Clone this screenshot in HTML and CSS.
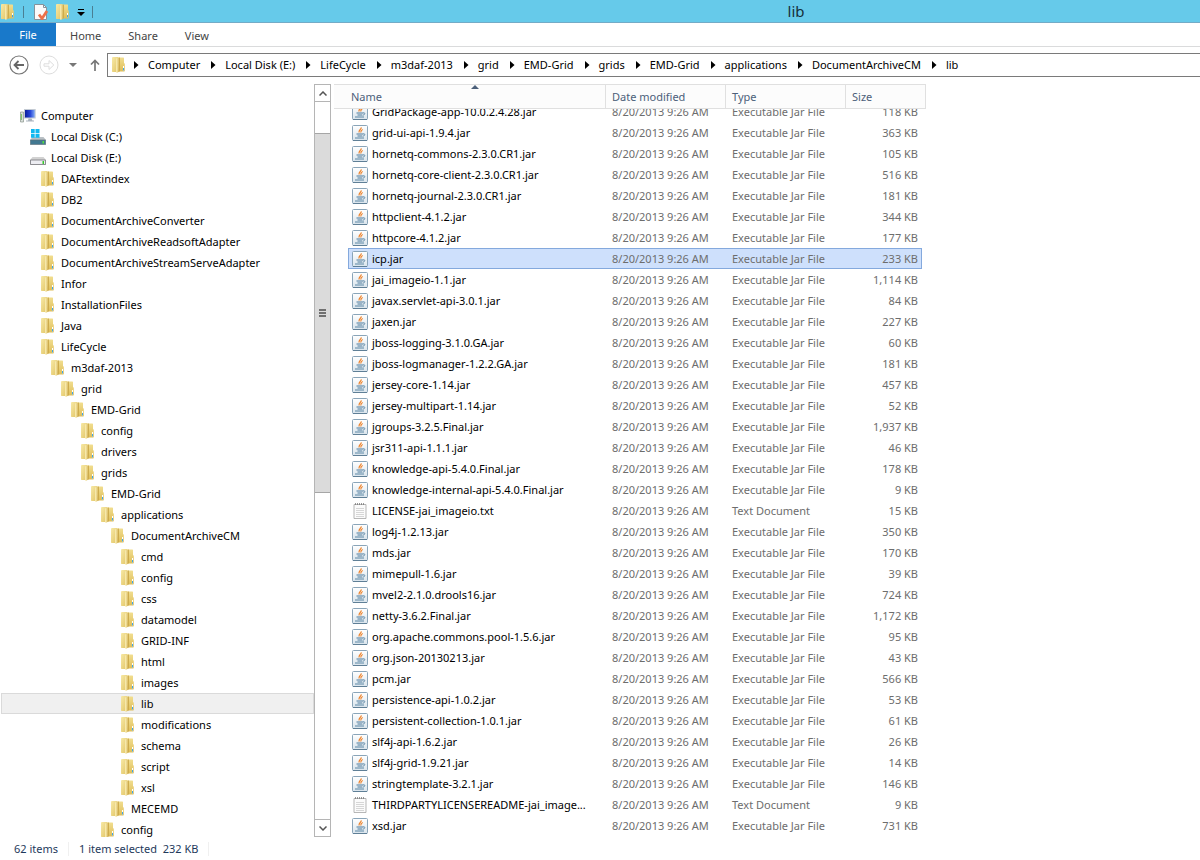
FILE: index.html
```html
<!DOCTYPE html>
<html lang="en">
<head>
<meta charset="utf-8">
<title>lib</title>
<link rel="stylesheet" href="styles.css">
</head>
<body>
<svg class="defs" aria-hidden="true">
  <defs>
    <linearGradient id="gf" x1="0" x2="1" y1="0" y2="1"><stop offset="0" stop-color="#f7e9a6"/><stop offset="1" stop-color="#e2c566"/></linearGradient>
    <linearGradient id="gb" x1="0" x2="0" y1="0" y2="1"><stop offset="0" stop-color="#f1de90"/><stop offset="1" stop-color="#dfbd58"/></linearGradient>
    <linearGradient id="gm" x1="0" x2="1" y1="0" y2="0"><stop offset="0" stop-color="#fbf0b8"/><stop offset="1" stop-color="#d9b95c"/></linearGradient>
    <linearGradient id="gj" x1="0" x2="0" y1="0" y2="1"><stop offset="0" stop-color="#ffffff"/><stop offset="1" stop-color="#d9e4ec"/></linearGradient>
    <linearGradient id="gs" x1="0" x2="1" y1="0" y2="0"><stop offset="0" stop-color="#0a1e9c"/><stop offset=".55" stop-color="#2746d8"/><stop offset="1" stop-color="#7fa8f4"/></linearGradient>
  </defs>
  <symbol id="folder" viewBox="0 0 16 16">
    <path d="M7 .5h5.500l.5.500V6l.8.800v7.200l-.5.500H7z" fill="url(#gb)"/>
    <path d="M1 .5L1.500 0H7v15H1.500L1 14.500z" fill="url(#gf)"/>
    <path d="M5 1.500L8.500.3V14L6 16l-1-.800z" fill="url(#gm)"/>
    <path d="M8.200.8h.8V14l-1.500 1.200z" fill="#cdab4c"/>
    <path d="M12 9h1v4.500h-1z" fill="#fff"/>
    <path d="M12 11h1v2.500h-1z" fill="#3fa5e8"/>
  </symbol>
  <symbol id="jar" viewBox="0 0 16 16">
    <rect x=".5" y=".5" width="15" height="15" rx="1" fill="url(#gj)" stroke="#8aa5b9"/>
    <path d="M1 15.500h14" stroke="#5f7f96"/>
    <path d="M9.200 2.300C9.800 4.300 6 5 7.200 7.500M10.800 4.500C8.700 5 8.800 6.300 8.800 7.500" fill="none" stroke="#ee8026" stroke-width="1.200"/>
    <path d="M4.500 9h6.500M5.500 11h4.500" fill="none" stroke="#4d7b9b" stroke-width="1.200"/>
    <path d="M3 13h9M11 8.900c2.600-.6 2.400 2-.5 2.300" fill="none" stroke="#5a86a4"/>
  </symbol>
  <symbol id="txt" viewBox="0 0 16 16">
    <path d="M2 1.500h12v14H2z" fill="#fbfbfb" stroke="#a5a5a5" stroke-width=".8"/>
    <path d="M4 5.500h8M4 7.500h8M4 9.500h8M4 11.500h8M4 13.500h8" stroke="#d6d6d6"/>
    <path d="M3 1h10" stroke="#777" stroke-width="1.500" stroke-dasharray="1 1"/>
  </symbol>
  <symbol id="pc" viewBox="0 0 16 16">
    <path d="M.5 4h3v10h-3z" fill="#d9dfda" stroke="#8b968e" stroke-width=".7"/>
    <path d="M1.300 6v6" stroke="#6fbf52"/>
    <path d="M4 1h11.700v9.500H4z" fill="#c3cad3"/>
    <path d="M5 2h9.700v7.500H5z" fill="url(#gs)"/>
    <path d="M8.500 10.500h3l1 2h1.500v1H6v-1h2z" fill="#aab3bd"/>
  </symbol>
  <symbol id="drive" viewBox="0 0 16 16">
    <path d="M2.500 7h11L16 10v4.500l-.5.500H.5l-.5-.5V10z" fill="#d2d2d2"/>
    <path d="M.5 10h15v4.500H.5z" fill="#ededf2" stroke="#77777c" stroke-width=".8"/>
    <path d="M12.500 11h1.500v3h-1.500z" fill="#39c82c"/>
  </symbol>
  <symbol id="windrive" viewBox="0 0 16 16">
    <path d="M2.500 8h11L16 11H0z" fill="#b9c0c5"/>
    <path d="M.3 11h15.400v4.500H.3z" fill="#427891" stroke="#5c6b74" stroke-width=".6"/>
    <path d="M12.500 12h1.500v2.500h-1.500z" fill="#53e03c"/>
    <path d="M1 0h3.700v4H1zM5.500 0h4v4h-4zM1 4.800h3.700v4H1zM5.500 4.800h4v4h-4z" fill="#10b8f0"/>
  </symbol>
  <symbol id="sep" viewBox="0 0 5 8"><path d="M0 0l4.500 4L0 8z" fill="#000"/></symbol>
</svg>

<header class="titlebar">
  <div class="quick">
    <svg class="ico"><use href="#folder"/></svg>
    <span class="bar"></span>
    <button class="tool" aria-label="Properties"><svg viewBox="0 0 16 16" class="ico"><path d="M1.500.5h9l3 3v12h-12z" fill="#fafafa" stroke="#85929b"/><path d="M10.500.5v3h3" fill="none" stroke="#85929b"/><path d="M6 10.500l3 4 5-7.500" fill="none" stroke="#ec7048" stroke-width="2.800"/></svg></button>
    <button class="tool" aria-label="New folder"><svg class="ico"><use href="#folder"/></svg></button>
    <button class="tool" aria-label="Customize"><svg viewBox="0 0 8 7" class="more"><path d="M1 .5h6" stroke="#000"/><path d="M0 3h8L4 7z"/></svg></button>
    <span class="bar"></span>
  </div>
  <h1>lib</h1>
</header>

<nav class="tabs">
  <button class="tab file">File</button>
  <button class="tab">Home</button>
  <button class="tab">Share</button>
  <button class="tab">View</button>
</nav>

<div class="navbar">
  <button class="tool" aria-label="Back"><svg viewBox="0 0 20 20" class="round"><circle cx="10" cy="10" r="9" fill="none" stroke="#777" stroke-width="1.200"/><path d="M15 10H6M9.500 6L5.500 10l4 4" fill="none" stroke="#666" stroke-width="1.800"/></svg></button>
  <button class="tool" aria-label="Forward"><svg viewBox="0 0 20 20" class="round"><circle cx="10" cy="10" r="9" fill="none" stroke="#ddd"/><path d="M5 8.800h5V5.500l4.800 4.500-4.800 4.500v-3.300H5z" fill="none" stroke="#ddd"/></svg></button>
  <button class="tool" aria-label="Recent locations"><svg viewBox="0 0 8 4" class="drop"><path d="M0 0h8L4 4z" fill="#777"/></svg></button>
  <button class="tool" aria-label="Up"><svg viewBox="0 0 10 12" class="up"><path d="M5 12V1.500M1 5.500l4-4 4 4" fill="none" stroke="#777" stroke-width="1.700"/></svg></button>
  <ol class="crumbs">
    <li><svg class="ico"><use href="#folder"/></svg></li>
    <li><svg class="arrow"><use href="#sep"/></svg><a href="#">Computer</a></li>
    <li><svg class="arrow"><use href="#sep"/></svg><a href="#">Local Disk (E:)</a></li>
    <li><svg class="arrow"><use href="#sep"/></svg><a href="#">LifeCycle</a></li>
    <li><svg class="arrow"><use href="#sep"/></svg><a href="#">m3daf-2013</a></li>
    <li><svg class="arrow"><use href="#sep"/></svg><a href="#">grid</a></li>
    <li><svg class="arrow"><use href="#sep"/></svg><a href="#">EMD-Grid</a></li>
    <li><svg class="arrow"><use href="#sep"/></svg><a href="#">grids</a></li>
    <li><svg class="arrow"><use href="#sep"/></svg><a href="#">EMD-Grid</a></li>
    <li><svg class="arrow"><use href="#sep"/></svg><a href="#">applications</a></li>
    <li><svg class="arrow"><use href="#sep"/></svg><a href="#">DocumentArchiveCM</a></li>
    <li><svg class="arrow"><use href="#sep"/></svg><a href="#">lib</a></li>
  </ol>
</div>

<main class="main">
  <ul class="tree">
    <li class="l0"><svg class="ico"><use href="#pc"/></svg>Computer</li>
    <li class="l1"><svg class="ico"><use href="#windrive"/></svg>Local Disk (C:)</li>
    <li class="l1"><svg class="ico"><use href="#drive"/></svg>Local Disk (E:)</li>
    <li class="l2"><svg class="ico"><use href="#folder"/></svg>DAFtextindex</li>
    <li class="l2"><svg class="ico"><use href="#folder"/></svg>DB2</li>
    <li class="l2"><svg class="ico"><use href="#folder"/></svg>DocumentArchiveConverter</li>
    <li class="l2"><svg class="ico"><use href="#folder"/></svg>DocumentArchiveReadsoftAdapter</li>
    <li class="l2"><svg class="ico"><use href="#folder"/></svg>DocumentArchiveStreamServeAdapter</li>
    <li class="l2"><svg class="ico"><use href="#folder"/></svg>Infor</li>
    <li class="l2"><svg class="ico"><use href="#folder"/></svg>InstallationFiles</li>
    <li class="l2"><svg class="ico"><use href="#folder"/></svg>Java</li>
    <li class="l2"><svg class="ico"><use href="#folder"/></svg>LifeCycle</li>
    <li class="l3"><svg class="ico"><use href="#folder"/></svg>m3daf-2013</li>
    <li class="l4"><svg class="ico"><use href="#folder"/></svg>grid</li>
    <li class="l5"><svg class="ico"><use href="#folder"/></svg>EMD-Grid</li>
    <li class="l6"><svg class="ico"><use href="#folder"/></svg>config</li>
    <li class="l6"><svg class="ico"><use href="#folder"/></svg>drivers</li>
    <li class="l6"><svg class="ico"><use href="#folder"/></svg>grids</li>
    <li class="l7"><svg class="ico"><use href="#folder"/></svg>EMD-Grid</li>
    <li class="l8"><svg class="ico"><use href="#folder"/></svg>applications</li>
    <li class="l9"><svg class="ico"><use href="#folder"/></svg>DocumentArchiveCM</li>
    <li class="l10"><svg class="ico"><use href="#folder"/></svg>cmd</li>
    <li class="l10"><svg class="ico"><use href="#folder"/></svg>config</li>
    <li class="l10"><svg class="ico"><use href="#folder"/></svg>css</li>
    <li class="l10"><svg class="ico"><use href="#folder"/></svg>datamodel</li>
    <li class="l10"><svg class="ico"><use href="#folder"/></svg>GRID-INF</li>
    <li class="l10"><svg class="ico"><use href="#folder"/></svg>html</li>
    <li class="l10"><svg class="ico"><use href="#folder"/></svg>images</li>
    <li class="l10 current"><svg class="ico"><use href="#folder"/></svg>lib</li>
    <li class="l10"><svg class="ico"><use href="#folder"/></svg>modifications</li>
    <li class="l10"><svg class="ico"><use href="#folder"/></svg>schema</li>
    <li class="l10"><svg class="ico"><use href="#folder"/></svg>script</li>
    <li class="l10"><svg class="ico"><use href="#folder"/></svg>xsl</li>
    <li class="l9"><svg class="ico"><use href="#folder"/></svg>MECEMD</li>
    <li class="l8"><svg class="ico"><use href="#folder"/></svg>config</li>
  </ul>

  <div class="scroll">
    <button class="step" aria-label="Scroll up"><svg viewBox="0 0 8 5"><path d="M.5 4.500L4 1l3.500 3.500" fill="none" stroke="#555" stroke-width="1.500"/></svg></button>
    <div class="track"><div class="thumb"><i></i><i></i><i></i></div></div>
    <button class="step" aria-label="Scroll down"><svg viewBox="0 0 8 5"><path d="M.5.5L4 4 7.500.5" fill="none" stroke="#555" stroke-width="1.500"/></svg></button>
  </div>

  <section class="files">
    <table>
      <thead>
        <tr><th>Name<svg class="sort" viewBox="0 0 8 4"><path d="M4 0l4 4H0z" fill="#4c607a"/></svg></th><th>Date modified</th><th>Type</th><th>Size</th></tr>
      </thead>
      <tbody>
        <tr><td><svg class="ico"><use href="#jar"/></svg><span>GridPackage-app-10.0.2.4.28.jar</span></td><td>8/20/2013 9:26 AM</td><td>Executable Jar File</td><td>118 KB</td></tr>
        <tr><td><svg class="ico"><use href="#jar"/></svg><span>grid-ui-api-1.9.4.jar</span></td><td>8/20/2013 9:26 AM</td><td>Executable Jar File</td><td>363 KB</td></tr>
        <tr><td><svg class="ico"><use href="#jar"/></svg><span>hornetq-commons-2.3.0.CR1.jar</span></td><td>8/20/2013 9:26 AM</td><td>Executable Jar File</td><td>105 KB</td></tr>
        <tr><td><svg class="ico"><use href="#jar"/></svg><span>hornetq-core-client-2.3.0.CR1.jar</span></td><td>8/20/2013 9:26 AM</td><td>Executable Jar File</td><td>516 KB</td></tr>
        <tr><td><svg class="ico"><use href="#jar"/></svg><span>hornetq-journal-2.3.0.CR1.jar</span></td><td>8/20/2013 9:26 AM</td><td>Executable Jar File</td><td>181 KB</td></tr>
        <tr><td><svg class="ico"><use href="#jar"/></svg><span>httpclient-4.1.2.jar</span></td><td>8/20/2013 9:26 AM</td><td>Executable Jar File</td><td>344 KB</td></tr>
        <tr><td><svg class="ico"><use href="#jar"/></svg><span>httpcore-4.1.2.jar</span></td><td>8/20/2013 9:26 AM</td><td>Executable Jar File</td><td>177 KB</td></tr>
        <tr class="selected"><td><svg class="ico"><use href="#jar"/></svg><span>icp.jar</span></td><td>8/20/2013 9:26 AM</td><td>Executable Jar File</td><td>233 KB</td></tr>
        <tr><td><svg class="ico"><use href="#jar"/></svg><span>jai_imageio-1.1.jar</span></td><td>8/20/2013 9:26 AM</td><td>Executable Jar File</td><td>1,114 KB</td></tr>
        <tr><td><svg class="ico"><use href="#jar"/></svg><span>javax.servlet-api-3.0.1.jar</span></td><td>8/20/2013 9:26 AM</td><td>Executable Jar File</td><td>84 KB</td></tr>
        <tr><td><svg class="ico"><use href="#jar"/></svg><span>jaxen.jar</span></td><td>8/20/2013 9:26 AM</td><td>Executable Jar File</td><td>227 KB</td></tr>
        <tr><td><svg class="ico"><use href="#jar"/></svg><span>jboss-logging-3.1.0.GA.jar</span></td><td>8/20/2013 9:26 AM</td><td>Executable Jar File</td><td>60 KB</td></tr>
        <tr><td><svg class="ico"><use href="#jar"/></svg><span>jboss-logmanager-1.2.2.GA.jar</span></td><td>8/20/2013 9:26 AM</td><td>Executable Jar File</td><td>181 KB</td></tr>
        <tr><td><svg class="ico"><use href="#jar"/></svg><span>jersey-core-1.14.jar</span></td><td>8/20/2013 9:26 AM</td><td>Executable Jar File</td><td>457 KB</td></tr>
        <tr><td><svg class="ico"><use href="#jar"/></svg><span>jersey-multipart-1.14.jar</span></td><td>8/20/2013 9:26 AM</td><td>Executable Jar File</td><td>52 KB</td></tr>
        <tr><td><svg class="ico"><use href="#jar"/></svg><span>jgroups-3.2.5.Final.jar</span></td><td>8/20/2013 9:26 AM</td><td>Executable Jar File</td><td>1,937 KB</td></tr>
        <tr><td><svg class="ico"><use href="#jar"/></svg><span>jsr311-api-1.1.1.jar</span></td><td>8/20/2013 9:26 AM</td><td>Executable Jar File</td><td>46 KB</td></tr>
        <tr><td><svg class="ico"><use href="#jar"/></svg><span>knowledge-api-5.4.0.Final.jar</span></td><td>8/20/2013 9:26 AM</td><td>Executable Jar File</td><td>178 KB</td></tr>
        <tr><td><svg class="ico"><use href="#jar"/></svg><span>knowledge-internal-api-5.4.0.Final.jar</span></td><td>8/20/2013 9:26 AM</td><td>Executable Jar File</td><td>9 KB</td></tr>
        <tr><td><svg class="ico"><use href="#txt"/></svg><span>LICENSE-jai_imageio.txt</span></td><td>8/20/2013 9:26 AM</td><td>Text Document</td><td>15 KB</td></tr>
        <tr><td><svg class="ico"><use href="#jar"/></svg><span>log4j-1.2.13.jar</span></td><td>8/20/2013 9:26 AM</td><td>Executable Jar File</td><td>350 KB</td></tr>
        <tr><td><svg class="ico"><use href="#jar"/></svg><span>mds.jar</span></td><td>8/20/2013 9:26 AM</td><td>Executable Jar File</td><td>170 KB</td></tr>
        <tr><td><svg class="ico"><use href="#jar"/></svg><span>mimepull-1.6.jar</span></td><td>8/20/2013 9:26 AM</td><td>Executable Jar File</td><td>39 KB</td></tr>
        <tr><td><svg class="ico"><use href="#jar"/></svg><span>mvel2-2.1.0.drools16.jar</span></td><td>8/20/2013 9:26 AM</td><td>Executable Jar File</td><td>724 KB</td></tr>
        <tr><td><svg class="ico"><use href="#jar"/></svg><span>netty-3.6.2.Final.jar</span></td><td>8/20/2013 9:26 AM</td><td>Executable Jar File</td><td>1,172 KB</td></tr>
        <tr><td><svg class="ico"><use href="#jar"/></svg><span>org.apache.commons.pool-1.5.6.jar</span></td><td>8/20/2013 9:26 AM</td><td>Executable Jar File</td><td>95 KB</td></tr>
        <tr><td><svg class="ico"><use href="#jar"/></svg><span>org.json-20130213.jar</span></td><td>8/20/2013 9:26 AM</td><td>Executable Jar File</td><td>43 KB</td></tr>
        <tr><td><svg class="ico"><use href="#jar"/></svg><span>pcm.jar</span></td><td>8/20/2013 9:26 AM</td><td>Executable Jar File</td><td>566 KB</td></tr>
        <tr><td><svg class="ico"><use href="#jar"/></svg><span>persistence-api-1.0.2.jar</span></td><td>8/20/2013 9:26 AM</td><td>Executable Jar File</td><td>53 KB</td></tr>
        <tr><td><svg class="ico"><use href="#jar"/></svg><span>persistent-collection-1.0.1.jar</span></td><td>8/20/2013 9:26 AM</td><td>Executable Jar File</td><td>61 KB</td></tr>
        <tr><td><svg class="ico"><use href="#jar"/></svg><span>slf4j-api-1.6.2.jar</span></td><td>8/20/2013 9:26 AM</td><td>Executable Jar File</td><td>26 KB</td></tr>
        <tr><td><svg class="ico"><use href="#jar"/></svg><span>slf4j-grid-1.9.21.jar</span></td><td>8/20/2013 9:26 AM</td><td>Executable Jar File</td><td>14 KB</td></tr>
        <tr><td><svg class="ico"><use href="#jar"/></svg><span>stringtemplate-3.2.1.jar</span></td><td>8/20/2013 9:26 AM</td><td>Executable Jar File</td><td>146 KB</td></tr>
        <tr><td><svg class="ico"><use href="#txt"/></svg><span>THIRDPARTYLICENSEREADME-jai_image...</span></td><td>8/20/2013 9:26 AM</td><td>Text Document</td><td>9 KB</td></tr>
        <tr><td><svg class="ico"><use href="#jar"/></svg><span>xsd.jar</span></td><td>8/20/2013 9:26 AM</td><td>Executable Jar File</td><td>731 KB</td></tr>
      </tbody>
    </table>
  </section>
</main>

<footer class="status">
  <span>62 items</span>
  <span>1 item selected&nbsp; 232 KB</span>
</footer>
</body>
</html>
```
FILE: styles.css
```css
* { box-sizing: border-box; }
body {
  margin: 0;
  height: 100vh;
  display: flex;
  flex-direction: column;
  overflow: hidden;
  background: #fff;
  color: #000;
  font: 11px/20px "Noto Sans", "Open Sans", sans-serif;
}
ul, ol { list-style: none; margin: 0; padding: 0; }
button { font: inherit; color: inherit; background: none; border: 0; padding: 0; }
a { color: inherit; text-decoration: none; }
svg { display: block; flex: none; }
.defs { position: absolute; width: 0; height: 0; }
.ico { width: 16px; height: 16px; }

.titlebar {
  display: grid;
  grid-template-columns: 392px 1fr;
  align-items: center;
  flex: none;
  height: 23px;
  background: #66caea;
  border-bottom: 1px solid #74abc6;
}
.titlebar h1 { margin: 0; font-size: 15px; line-height: 22px; font-weight: 400; text-align: center; color: #16303a; }
.quick { display: flex; align-items: center; gap: 6px; padding-top: 2px; }
.bar { width: 1px; height: 12px; margin: 0 3px 0 1px; background: #4a7f93; }
.more { width: 8px; height: 7px; }

.tabs { display: flex; flex: none; height: 24px; border-bottom: 1px solid #dadbdc; }
.tab { padding: 2px 13px 0 14px; color: #444; line-height: 22px; }
.tab.file { width: 56px; padding: 0; background: #1979ca; color: #fff; }

.navbar { display: flex; align-items: center; flex: none; padding: 6px 0 7px 9px; }
.round { width: 20px; height: 20px; margin-right: 10px; }
.drop { width: 8px; height: 4px; }
.up { width: 10px; height: 12px; margin: 0 7px 0 13px; }
.crumbs { display: flex; align-items: center; flex: 1; height: 24px; padding-left: 3px; border: 1px solid #7a7a7a; border-right: 0; }
.crumbs li { display: flex; align-items: center; white-space: nowrap; }
.arrow { width: 5px; height: 8px; margin: 0 9px 0 11px; }
.crumbs li:nth-child(2) .arrow { margin-left: 7px; }

.main { display: flex; flex: 1; min-height: 0; }
.tree { width: 314px; flex: none; padding: 21px 0 0 1px; overflow: hidden; }
.tree li { display: flex; align-items: center; gap: 5px; height: 21px; border: 1px solid transparent; white-space: nowrap; }
.tree .current { background: #f0f0f0; border-color: #dadada; }
.l0 { padding-left: 18px; }
.l1 { padding-left: 28px; }
.l2 { padding-left: 38px; }
.l3 { padding-left: 48px; }
.l4 { padding-left: 58px; }
.l5 { padding-left: 68px; }
.l6 { padding-left: 78px; }
.l7 { padding-left: 88px; }
.l8 { padding-left: 98px; }
.l9 { padding-left: 108px; }
.l10 { padding-left: 118px; }

.scroll { display: flex; flex-direction: column; flex: none; width: 17px; border: 1px solid #b5b5b5; }
.step { display: grid; place-items: center; height: 16px; }
.step svg { width: 8px; height: 5px; }
.track { flex: 1; padding-top: 31px; border: solid #b5b5b5; border-width: 1px 0; }
.thumb { display: flex; flex-direction: column; align-items: center; justify-content: center; gap: 1px; height: 52.5%; background: #dbdbdb; border: solid #a6a6a6; border-width: 1px 0; }
.thumb i { width: 7px; height: 2px; background: #707070; }

.files { flex: 1; padding-left: 3px; overflow: hidden; }
table, thead, tbody { display: block; }
table { width: 592px; }
tr { display: grid; grid-template-columns: 1fr 120px 120px 77px; }
thead tr { grid-template-columns: 1fr 120px 120px 80px; height: 25px; border: solid #e0e0e0; border-width: 1px 1px 1px 0; background: #fcfcfc; }
th { position: relative; padding: 0 0 0 6px; font-weight: 400; line-height: 23px; text-align: left; color: #4c607a; border-left: 1px solid #e0e0e0; }
th:first-child { padding-left: 17px; border-left: 0; }
.sort { position: absolute; top: 0; left: 137px; width: 8px; height: 4px; }
tbody { padding: 0 4px 0 14px; overflow: hidden; }
tbody tr { height: 21px; }
tbody tr:first-child { margin-top: -8px; }
td { padding: 0 0 0 7px; line-height: 21px; color: #6d6d6d; white-space: nowrap; }
td:first-child { display: flex; align-items: center; gap: 4px; padding-left: 4px; color: #000; }
td:last-child { padding: 0 4px 0 0; text-align: right; }
.selected { background: #cee0fc; outline: 1px solid #84a9dd; outline-offset: -1px; }

.status { display: flex; flex: none; align-items: center; height: 23px; padding-left: 14px; color: #1e395b; line-height: 14px; }
.status span { padding-right: 10px; margin-right: 10px; border-right: 1px solid #f0f0f0; }
```
